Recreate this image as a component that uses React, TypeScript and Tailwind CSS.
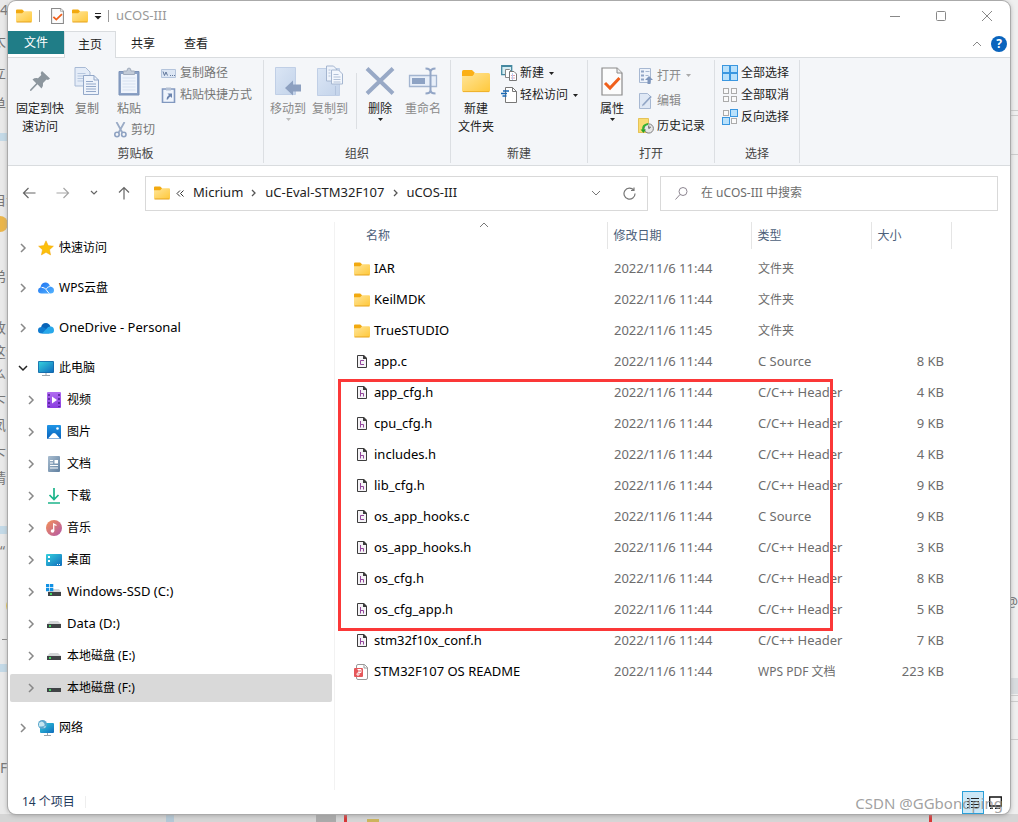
import { ReactNode } from 'react'

type FileItem = {
    name: string
    date: string
    type: string
    size?: string
    icon: 'folder' | 'c' | 'h' | 'pdf'
}

const files: FileItem[] = [
    { name: 'IAR', date: '2022/11/6 11:44', type: '文件夹', icon: 'folder' },
    { name: 'KeilMDK', date: '2022/11/6 11:44', type: '文件夹', icon: 'folder' },
    { name: 'TrueSTUDIO', date: '2022/11/6 11:45', type: '文件夹', icon: 'folder' },
    { name: 'app.c', date: '2022/11/6 11:44', type: 'C Source', size: '8 KB', icon: 'c' },
    { name: 'app_cfg.h', date: '2022/11/6 11:44', type: 'C/C++ Header', size: '4 KB', icon: 'h' },
    { name: 'cpu_cfg.h', date: '2022/11/6 11:44', type: 'C/C++ Header', size: '9 KB', icon: 'h' },
    { name: 'includes.h', date: '2022/11/6 11:44', type: 'C/C++ Header', size: '4 KB', icon: 'h' },
    { name: 'lib_cfg.h', date: '2022/11/6 11:44', type: 'C/C++ Header', size: '9 KB', icon: 'h' },
    { name: 'os_app_hooks.c', date: '2022/11/6 11:44', type: 'C Source', size: '9 KB', icon: 'c' },
    { name: 'os_app_hooks.h', date: '2022/11/6 11:44', type: 'C/C++ Header', size: '3 KB', icon: 'h' },
    { name: 'os_cfg.h', date: '2022/11/6 11:44', type: 'C/C++ Header', size: '8 KB', icon: 'h' },
    { name: 'os_cfg_app.h', date: '2022/11/6 11:44', type: 'C/C++ Header', size: '5 KB', icon: 'h' },
    { name: 'stm32f10x_conf.h', date: '2022/11/6 11:44', type: 'C/C++ Header', size: '7 KB', icon: 'h' },
    { name: 'STM32F107 OS README', date: '2022/11/6 11:44', type: 'WPS PDF 文档', size: '223 KB', icon: 'pdf' },
]

function Gradients() {
    return (
        <svg width="0" height="0" className="absolute" aria-hidden="true">
            <defs>
                <linearGradient id="gFolder" x1="0" y1="0" x2="1" y2="1">
                    <stop offset="0" stopColor="#ffe59a" />
                    <stop offset="1" stopColor="#ffc83a" />
                </linearGradient>
                <linearGradient id="gScreen" x1="0" y1="0" x2="1" y2="1">
                    <stop offset="0" stopColor="#35d0dd" />
                    <stop offset="1" stopColor="#0f6cbd" />
                </linearGradient>
                <linearGradient id="gCloud" x1="0" y1="0" x2="1" y2="1">
                    <stop offset="0" stopColor="#1a6ff0" />
                    <stop offset="1" stopColor="#55b4ff" />
                </linearGradient>
                <linearGradient id="gVideo" x1="0" y1="0" x2="0" y2="1">
                    <stop offset="0" stopColor="#b06cf0" />
                    <stop offset="1" stopColor="#8a3ee0" />
                </linearGradient>
                <linearGradient id="gPhoto" x1="0" y1="0" x2="0" y2="1">
                    <stop offset="0" stopColor="#1f95e6" />
                    <stop offset="1" stopColor="#0861ba" />
                </linearGradient>
                <linearGradient id="gDoc" x1="0" y1="0" x2="1" y2="1">
                    <stop offset="0" stopColor="#a9bdd0" />
                    <stop offset="1" stopColor="#5f7f9f" />
                </linearGradient>
                <linearGradient id="gMusic" x1="0" y1="0" x2="1" y2="1">
                    <stop offset="0" stopColor="#f59256" />
                    <stop offset="1" stopColor="#b257a8" />
                </linearGradient>
                <linearGradient id="gPaper" x1="0" y1="0" x2="1" y2="1">
                    <stop offset="0" stopColor="#dbe6f5" />
                    <stop offset="1" stopColor="#c3d3ea" />
                </linearGradient>
            </defs>
        </svg>
    )
}

function Svg({ w, h, children }: { w: number; h: number; children: ReactNode }) {
    return (
        <svg width={w} height={h} viewBox={`0 0 ${w} ${h}`} fill="none" className="shrink-0" aria-hidden="true">
            {children}
        </svg>
    )
}

function Folder() {
    return (
        <Svg w={16} h={14}>
            <path d="M0 1.500Q0 .5 1 .5h5.200L8 2.200V5H0z" fill="#f2a90f" />
            <path d="M0 4.200h6.200L8 2.300h7q1 0 1 1V12q0 1-1 1H1q-1 0-1-1z" fill="url(#gFolder)" />
            <path d="M.5 13h15" stroke="#e5a21d" />
        </Svg>
    )
}

function BigFolder() {
    return (
        <Svg w={28} h={24}>
            <path d="M0 2.500Q0 1 1.500 1H10l2.500 2.500V8H0z" fill="#fbb017" />
            <path d="M0 7h10.500L13 4h13.500Q28 4 28 5.500v16q0 1.500-1.500 1.500h-25Q0 23 0 21.500z" fill="url(#gFolder)" />
            <path d="M1 22.600h26" stroke="#eeb02a" />
        </Svg>
    )
}

function CheckDoc({ big = false }: { big?: boolean }) {
    return (
        <svg width={big ? 22 : 13} height={big ? 29 : 16} viewBox="0 0 22 29" preserveAspectRatio="none" fill="none" aria-hidden="true">
            <path d="M1 1h15l5 5v22H1z" fill="#fcfcfc" stroke="#8a8a8a" strokeWidth={big ? 1.2 : 1.8} />
            <path d="M16 1v5h5" stroke="#8a8a8a" fill="#eee" />
            <path d="M4 16l5 5 9.500-10" stroke="#f0601c" strokeWidth="3" />
        </svg>
    )
}

function Caret({ color = '#222' }: { color?: string }) {
    return (
        <Svg w={5} h={3}>
            <path d="M0 0h5L2.500 3z" fill={color} />
        </Svg>
    )
}

function Chevron({ open = false }: { open?: boolean }) {
    return (
        <Svg w={10} h={10}>
            {open ? (
                <path d="M1 3l4 4 4-4" stroke="#222" strokeWidth="1.500" />
            ) : (
                <path d="M3 1l4 4-4 4" stroke="#888" strokeWidth="1.500" />
            )}
        </Svg>
    )
}

function PinIcon() {
    return (
        <Svg w={22} h={22}>
            <path d="M13 1l8 7.500-2 1.500-1.500-.5-3.500 3.500q.5 3.500-1.500 5.500l-4-4.200L2 21l-1-.2.200-1.200 6-6.300L3.500 9.500Q6 7.500 9 8.300L12.300 5l-.6-2z" fill="#8c969e" />
        </Svg>
    )
}

function CopyIcon() {
    return (
        <Svg w={26} h={28}>
            <path d="M1 .5h10.500l4.500 4.500v14H1z" fill="#e4ecf8" stroke="#a8bad5" />
            <path d="M3.500 6.500h8M3.500 9h10M3.500 11.500h10M3.500 14h10" stroke="#b6c7df" />
            <path d="M9.500 8.500H20l4.500 4.500v14.500h-15z" fill="#eef3fb" stroke="#93a8c9" />
            <path d="M20 8.500V13h4.500" stroke="#93a8c9" />
            <path d="M12 14.500h7M12 17h10M12 19.500h10M12 22h10M12 24.500h10" stroke="#93a8c9" />
        </Svg>
    )
}

function PasteIcon() {
    return (
        <Svg w={22} h={29}>
            <path d="M1 4.500h20V28H1z" fill="#8ba1c5" stroke="#7b92b8" />
            <path d="M3 7h16v19H3z" fill="#eff4fc" />
            <path d="M4.500 11h13M4.500 14h13M4.500 17h13M4.500 20h13M4.500 23h13" stroke="#d7e1f0" />
            <path d="M5.500 7.500V4H9q0-3 2-3t2 3h3.500v3.500z" fill="#c2cbd8" stroke="#a1acbd" />
        </Svg>
    )
}

function CutIcon() {
    return (
        <Svg w={13} h={16}>
            <path d="M2.500 0l5.800 10.500M10.500 0L4.700 10.500" stroke="#9aabc6" strokeWidth="1.800" />
            <circle cx="3" cy="12.500" r="2.200" stroke="#8ea2c2" strokeWidth="1.600" />
            <circle cx="9.800" cy="12.500" r="2.200" stroke="#8ea2c2" strokeWidth="1.600" />
        </Svg>
    )
}

function CopyPathIcon() {
    return (
        <Svg w={16} h={16}>
            <path d="M.5 4.500h14v8H.5z" fill="#dce6f4" stroke="#b4c4dc" />
            <path d="M2 6.500l1.500 4L5 7l1.500 3.500M9 10.500h1M11 10.500h1M13 10.500h1" stroke="#62789c" />
        </Svg>
    )
}

function PasteShortcutIcon() {
    return (
        <Svg w={16} h={16}>
            <path d="M1.500 2h12v13.500h-12z" fill="#eff4fc" stroke="#8198bf" strokeWidth="1.600" />
            <path d="M5 .5h5v3H5z" fill="#b3c0d4" />
            <path d="M5.500 12.500q0-3 2.500-4.500L6.500 6.500h4.500V11L9.500 9.500q-2 1-2.500 3z" fill="#6a83ad" />
        </Svg>
    )
}

function MoveToIcon() {
    return (
        <Svg w={28} h={30}>
            <path d="M1.500 1.500h20v27h-20z" fill="url(#gPaper)" stroke="#c0cfe6" />
            <path d="M11 22l8-7.500v4h8v7h-8v4z" fill="#8da0c0" />
        </Svg>
    )
}

function CopyToIcon() {
    return (
        <Svg w={28} h={32}>
            <path d="M1.500 3.500h22v27h-22z" fill="url(#gPaper)" stroke="#c0cfe6" />
            <path d="M19.500 21v9" stroke="#b3c4de" />
            <path d="M10.500 1h7l3 3v12h-10z" fill="#eef3fb" stroke="#a5b6d0" />
            <path d="M15.500 5h7l4 4v10h-11z" fill="#f3f7fd" stroke="#a5b6d0" />
            <path d="M17.500 9.500h5M17.500 12h7M17.500 14.500h7M17.500 17h7M12.500 5h2M12.500 8h2M12.500 11h2" stroke="#b2c1d8" />
        </Svg>
    )
}

function DeleteIcon() {
    return (
        <Svg w={30} h={30}>
            <path d="M2 2.500l26 25M28 2.500l-26 25" stroke="#98a9c6" strokeWidth="4" />
        </Svg>
    )
}

function RenameIcon() {
    return (
        <Svg w={30} h={28}>
            <path d="M1.500 8.500h27v11h-27z" fill="#e8eff9" stroke="#a3b5d0" strokeWidth="1.300" />
            <path d="M4 11h13v6H4z" fill="#8ea3c4" />
            <path d="M17.500 1.500q5 0 5 3.500v18q0 3.500-5 3.500M27.500 1.500q-5 0-5 3.500v18q0 3.500 5 3.500" stroke="#93a6c6" strokeWidth="2" />
        </Svg>
    )
}

function NewItemIcon() {
    return (
        <Svg w={16} h={16}>
            <path d="M.7.700h10v9h-10z" fill="#d5edf3" stroke="#4488a0" strokeWidth="1.300" />
            <path d="M1 1.500h9.500" stroke="#4488a0" />
            <path d="M4.500 4.500h4l2 2v6h-6z" fill="#fff" stroke="#888" />
            <path d="M8.500 6.500H13l2.500 2.500v6.500h-7z" fill="#fff" stroke="#777" />
            <path d="M10 10.500h4M10 13h4" stroke="#e2a0b0" />
            <path d="M11.500 8v7" stroke="#b8cdf0" />
        </Svg>
    )
}

function EasyAccessIcon() {
    return (
        <Svg w={16} h={16}>
            <path d="M4.500.5h7l4 4v11h-11z" fill="#fff" stroke="#777" />
            <path d="M11.500.5v4h4" stroke="#777" />
            <path d="M2 4h6M0 6.500h6M1.500 9h4" stroke="#1667b5" strokeWidth="1.300" />
        </Svg>
    )
}

function OpenIcon() {
    return (
        <Svg w={14} h={16}>
            <path d="M.5.5h11v14H.5z" fill="#eef3fb" stroke="#a7b8d2" />
            <path d="M2 2.500h3v2H2zM2 6.500h3v2H2zM2 10.500h3v2H2z" fill="#8fa4c5" />
            <path d="M6.500 3.500h4M6.500 7.500h3" stroke="#a7b8d2" />
            <path d="M10 8l4 4h-2.500v4h-3v-4H6z" fill="#7f96bc" />
        </Svg>
    )
}

function EditIcon() {
    return (
        <Svg w={14} h={16}>
            <path d="M.5.5h8l3 3v12H.5z" fill="#dfe8f5" stroke="#a7b8d2" />
            <path d="M13 4L5 12.500l-2.500 1.500.8-2.800L11.500 2.500z" fill="#8fa4c5" stroke="#f1f5fb" strokeWidth=".5" />
        </Svg>
    )
}

function HistoryIcon() {
    return (
        <Svg w={16} h={16}>
            <path d="M0 .5h10.500V15H0z" fill="#f9dc72" />
            <path d="M.5.5h10v14H.5z" stroke="#e5c258" />
            <circle cx="10.800" cy="10.500" r="4.600" fill="#e6e6e6" stroke="#7f7f7f" />
            <path d="M10.800 7.500v3l2-1.500" stroke="#555" />
            <path d="M2.500 11.500h5.500L5.500 15z" fill="#2aa22a" />
            <path d="M5 12q-.5-5 5-6" stroke="#35b135" strokeWidth="2" />
        </Svg>
    )
}

function SelectIcon({ on }: { on: boolean[] }) {
    return (
        <Svg w={16} h={16}>
            {on.map((selected, i) => {
                const x = (i % 2) * 8
                const y = Math.floor(i / 2) * 8
                return selected ? (
                    <rect key={i} x={x + 0.5} y={y + 0.5} width="7" height="7" fill="#b9e1fb" stroke="#3a97e0" />
                ) : (
                    <rect key={i} x={x + 1.5} y={y + 1.5} width="5" height="5" fill="#fafafa" stroke="#ababab" />
                )
            })}
        </Svg>
    )
}

function SourceFileIcon({ kind }: { kind: 'c' | 'h' }) {
    return (
        <Svg w={16} h={16}>
            <path d="M3.500 1.500h6l3 3v9h-9z" fill="#f5f3f6" stroke="#3d3d3d" />
            <path d="M9 1h1l3 3v1H9z" fill="#3d3d3d" />
            {kind === 'h' ? (
                <path d="M6.500 5v6.500M6.500 8.500h3v3" stroke="#93479c" />
            ) : (
                <path d="M10 6.500H6.500v4H10" stroke="#93479c" />
            )}
        </Svg>
    )
}

function PdfIcon() {
    return (
        <Svg w={16} h={16}>
            <path d="M2.500 2q0-1.500 1.500-1.500h6.500l3 3V14q0 1.500-1.500 1.500H4q-1.500 0-1.500-1.500z" fill="#fff" stroke="#999" />
            <path d="M10 .5v3.500h3.500" stroke="#999" />
            <rect x="0" y="4" width="9" height="9" rx="1" fill="#e5575a" />
            <path d="M3.500 5.500h3.500v3H4.500q-2 .5-1.500 2.500h2V6" stroke="#fff" />
        </Svg>
    )
}

function FileIcon({ icon }: { icon: FileItem['icon'] }) {
    if (icon === 'folder') return <Folder />
    if (icon === 'pdf') return <PdfIcon />
    return <SourceFileIcon kind={icon} />
}

const treeIcons: Record<string, ReactNode> = {
    star: <path d="M8 .8l2.200 4.800 5.200.6-3.900 3.500 1.100 5.200L8 12.300l-4.600 2.600 1.100-5.200L.6 6.200l5.200-.6z" fill="#fcc00b" stroke="#f3a50c" strokeWidth=".5" />,
    wps: (
        <>
            <path d="M3.500 13.500Q0 13.500 0 10.500 0 8 2.500 7.500 3 3 7 2.500q4-.2 5 4 4 .5 4 3.700 0 3.300-3.500 3.300z" fill="url(#gCloud)" />
            <path d="M3.500 7.300q3.500 0 5 2.700t3 3.500" stroke="#fff" />
            <path d="M12 6.500q-2.500 0-3.700 2.500" stroke="#dff0ff" />
        </>
    ),
    onedrive: (
        <>
            <path d="M3 8Q3.500 3 8 3q3 0 4.500 3.500L9 10z" fill="#0864b8" />
            <path d="M3.500 13.500Q0 13.500 0 10.300 0 7 4 7q2 0 3.500 1.500l4 5z" fill="#0f7bd0" />
            <path d="M4 13.400l4.500-4.600q1.500-2.500 4-2.300 3.500.3 3.500 3.700 0 3.300-3.500 3.300h-8z" fill="#28a8ea" />
        </>
    ),
    pc: (
        <>
            <path d="M4 15.500h8M8 13v2.500" stroke="#9aa4ad" />
            <rect x="0" y="1" width="16" height="12" rx="1" fill="#1668a8" />
            <rect x=".8" y="1.800" width="14.400" height="10.400" fill="url(#gScreen)" />
        </>
    ),
    video: (
        <>
            <rect x="1" y="0" width="14" height="16" rx="1" fill="url(#gVideo)" />
            <path d="M3 2v13M13 2v13" stroke="#4e1e91" strokeWidth="1.500" strokeDasharray="2 2" />
            <path d="M6 4.500l5 3.500-5 3.500z" fill="#fff" />
        </>
    ),
    photo: (
        <>
            <rect x="1" y="1" width="14" height="14" rx="1" fill="url(#gPhoto)" />
            <path d="M2 14.500l4.500-5q1.500-1.200 3 0l4.500 5z" fill="#fff" />
            <circle cx="11.500" cy="4.500" r="1.300" fill="#fff" />
        </>
    ),
    doc: (
        <>
            <rect x="2" y="0" width="12" height="16" rx="1" fill="url(#gDoc)" />
            <path d="M4 4.500h3M4 7h3M4 9.500h8M4 12h8" stroke="#fff" />
            <path d="M8.500 4h3.500v3.500H8.500z" fill="#fff" />
        </>
    ),
    download: <path d="M8 0v11M3.500 7L8 11.500 12.500 7M2 15h12" stroke="#1cb48a" strokeWidth="1.700" />,
    music: (
        <>
            <circle cx="8" cy="8" r="8" fill="url(#gMusic)" />
            <circle cx="6.500" cy="11" r="1.800" fill="#fff" />
            <path d="M7.700 11V4l2.800 1.500" stroke="#fff" strokeWidth="1.300" />
        </>
    ),
    desktop: (
        <>
            <rect x="0" y="2" width="16" height="12" rx="1" fill="url(#gScreen)" />
            <path d="M2 4h2v2H2zM2 8h2v2H2zM11 12h1v1h-1zM13 12h1v1h-1z" fill="#fff" />
        </>
    ),
    windows: (
        <>
            <path d="M5 5h8l2 3H2z" fill="#d4d6d8" />
            <path d="M2 8h13v4H2z" fill="#404346" />
            <path d="M4 9h2v2H4z" fill="#45d564" />
            <path d="M0 0h3.300v3.300H0zM4 0h3.300v3.300H4zM0 4h3.300v3.300H0zM4 4h3.300v3.300H4z" fill="#1191e4" />
        </>
    ),
    drive: (
        <>
            <path d="M4 5h8l3 3H1z" fill="#d4d6d8" />
            <path d="M1 8h14v4H1z" fill="#404346" />
            <path d="M3 9h2v2H3z" fill="#45d564" />
        </>
    ),
    network: (
        <>
            <path d="M6 15.500h7M9.500 13v2.500" stroke="#9aa4ad" />
            <rect x="2" y="3" width="14" height="10" rx="1" fill="url(#gScreen)" />
            <circle cx="4.500" cy="4.500" r="4.500" fill="#5aa6cc" />
            <path d="M1 3q3-3 5 0T4 6.500 1 5zM5 7l3-1-1 2z" fill="#c5e6f0" />
        </>
    ),
}

const tree = [
    { label: '快速访问', icon: 'star', row: 'h-10 pl-2' },
    { label: 'WPS云盘', icon: 'wps', row: 'h-10 pl-2' },
    { label: 'OneDrive - Personal', icon: 'onedrive', row: 'h-10 pl-2' },
    { label: '此电脑', icon: 'pc', row: '-mb-1 h-10 pl-2', open: true },
    { label: '视频', icon: 'video', row: 'h-8 pl-4' },
    { label: '图片', icon: 'photo', row: 'h-8 pl-4' },
    { label: '文档', icon: 'doc', row: 'h-8 pl-4' },
    { label: '下载', icon: 'download', row: 'h-8 pl-4' },
    { label: '音乐', icon: 'music', row: 'h-8 pl-4' },
    { label: '桌面', icon: 'desktop', row: 'h-8 pl-4' },
    { label: 'Windows-SSD (C:)', icon: 'windows', row: 'h-8 pl-4' },
    { label: 'Data (D:)', icon: 'drive', row: 'h-8 pl-4' },
    { label: '本地磁盘 (E:)', icon: 'drive', row: 'h-8 pl-4' },
    { label: '本地磁盘 (F:)', icon: 'drive', row: 'my-[2px] h-7 rounded-[2px] bg-[#d9d9d9] pl-4' },
    { label: '网络', icon: 'network', row: 'mt-[6px] h-10 pl-2' },
]

function Group({ title, className, children }: { title: string; className: string; children: ReactNode }) {
    return (
        <section className={`my-[2px] flex shrink-0 flex-col border-r border-[#dcdfe3] ${className}`}>
            <div className="flex h-[85px] items-start pt-px">{children}</div>
            <h2 className="text-center leading-[18px] text-[#444]">{title}</h2>
        </section>
    )
}

function BigButton({ icon, label, className, caret }: { icon: ReactNode; label: ReactNode; className: string; caret?: string }) {
    return (
        <button className={`flex shrink-0 flex-col items-center pt-1 leading-[18px] ${className}`}>
            <span className="mb-[3px] flex h-8 items-center">{icon}</span>
            <span>{label}</span>
            {caret && <Caret color={caret} />}
        </button>
    )
}

function SmallButton({ icon, label, className = '', caret }: { icon: ReactNode; label: string; className?: string; caret?: string }) {
    return (
        <button className={`flex items-center whitespace-nowrap ${className}`}>
            <span className="mr-[3px] flex w-4 justify-center">{icon}</span>
            <span className="mr-[5px]">{label}</span>
            {caret && <Caret color={caret} />}
        </button>
    )
}

function Ribbon() {
    return (
        <div className="flex h-[108px] overflow-hidden border-b border-[#d9dcdf] bg-[#f4f6f9]">
            <Group title="剪贴板" className="w-64">
                <BigButton className="ml-[3px] w-[58px]" icon={<PinIcon />} label={<>固定到快<br />速访问</>} />
                <BigButton className="w-9 text-[#767676]" icon={<CopyIcon />} label="复制" />
                <div className="w-12 text-[#767676]">
                    <BigButton className="w-12" icon={<PasteIcon />} label="粘贴" />
                    <SmallButton className="ml-[7px] h-6" icon={<CutIcon />} label="剪切" />
                </div>
                <div className="ml-2 pt-px text-[#767676]">
                    <SmallButton className="h-[22px]" icon={<CopyPathIcon />} label="复制路径" />
                    <SmallButton className="h-[22px]" icon={<PasteShortcutIcon />} label="粘贴快捷方式" />
                </div>
            </Group>
            <Group title="组织" className="w-[187px]">
                <BigButton className="ml-[3px] w-[42px] text-[#8a8a8a]" icon={<MoveToIcon />} label="移动到" caret="#bbb" />
                <BigButton className="w-[42px] text-[#8a8a8a]" icon={<CopyToIcon />} label="复制到" caret="#bbb" />
                <div className="mt-3 ml-[5px] h-14 w-px bg-[#dcdfe3]" />
                <BigButton className="w-[46px]" icon={<DeleteIcon />} label="删除" caret="#222" />
                <BigButton className="w-10 text-[#8a8a8a]" icon={<RenameIcon />} label="重命名" />
            </Group>
            <Group title="新建" className="w-[137px]">
                <BigButton className="w-[50px]" icon={<BigFolder />} label={<>新建<br />文件夹</>} />
                <div className="pt-px">
                    <SmallButton className="h-[22px]" icon={<NewItemIcon />} label="新建" caret="#222" />
                    <SmallButton className="h-[22px]" icon={<EasyAccessIcon />} label="轻松访问" caret="#222" />
                </div>
            </Group>
            <Group title="打开" className="w-[127px]">
                <BigButton className="w-12" icon={<CheckDoc big />} label="属性" caret="#222" />
                <div className="ml-[2px] pt-[2px]">
                    <SmallButton className="h-[25px] text-[#8a8a8a]" icon={<OpenIcon />} label="打开" caret="#aaa" />
                    <SmallButton className="h-[25px] text-[#8a8a8a]" icon={<EditIcon />} label="编辑" />
                    <SmallButton className="h-[25px]" icon={<HistoryIcon />} label="历史记录" />
                </div>
            </Group>
            <Group title="选择" className="w-[85px]">
                <div className="ml-[7px] pt-px">
                    <SmallButton className="h-[22px]" icon={<SelectIcon on={[true, true, true, true]} />} label="全部选择" />
                    <SmallButton className="h-[22px]" icon={<SelectIcon on={[false, false, false, false]} />} label="全部取消" />
                    <SmallButton className="h-[22px]" icon={<SelectIcon on={[false, true, true, false]} />} label="反向选择" />
                </div>
            </Group>
        </div>
    )
}

function TitleBar() {
    return (
        <header className="flex h-[30px] items-center pl-2 text-[#999]">
            <Folder />
            <span className="ml-[7px] h-3 w-px bg-[#999]" />
            <button className="ml-[11px]" aria-label="属性"><CheckDoc /></button>
            <button className="ml-2" aria-label="新建文件夹"><Folder /></button>
            <button className="mx-[6px]" aria-label="自定义快速访问工具栏">
                <Svg w={8} h={8}>
                    <path d="M1 1.500h6" stroke="#222" />
                    <path d="M.5 4h7L4 7.500z" fill="#222" />
                </Svg>
            </button>
            <span className="h-3 w-px bg-[#999]" />
            <h1 className="ml-[7px] text-[13px]">uCOS-III</h1>
            <div className="ml-auto flex">
                <button className="flex h-7 w-[46px] items-center justify-center" aria-label="最小化">
                    <Svg w={10} h={10}><path d="M0 5.500h10" stroke="#888" /></Svg>
                </button>
                <button className="flex h-7 w-[46px] items-center justify-center" aria-label="最大化">
                    <Svg w={10} h={10}><rect x=".5" y=".5" width="9" height="9" rx="1" stroke="#888" /></Svg>
                </button>
                <button className="flex h-7 w-[46px] items-center justify-center" aria-label="关闭">
                    <Svg w={10} h={10}><path d="M0 0l10 10M10 0L0 10" stroke="#888" /></Svg>
                </button>
            </div>
        </header>
    )
}

function Tabs() {
    return (
        <nav className="flex h-[27px] border-b border-[#d9dcdf]">
            <button className="mb-[3px] w-14 bg-[#207d87] text-white">文件</button>
            <button className="-mb-px w-[52px] border border-b-0 border-[#d9dcdf] bg-[#f4f6f9]">主页</button>
            <button className="w-[54px]">共享</button>
            <button className="w-[52px]">查看</button>
            <button className="mr-[9px] ml-auto" aria-label="最小化功能区">
                <Svg w={10} h={8}><path d="M1 6l4-4 4 4" stroke="#888" /></Svg>
            </button>
            <button className="mr-[3px] flex items-center" aria-label="帮助">
                <span className="flex size-4 items-center justify-center rounded-full bg-[#0a64bd] leading-4 font-bold text-white">?</span>
            </button>
        </nav>
    )
}

function Separator() {
    return (
        <Svg w={6} h={8}><path d="M1 1l3 3-3 3" stroke="#555" strokeWidth="1.300" /></Svg>
    )
}

function AddressBar() {
    return (
        <div className="flex h-[54px] items-center pr-3">
            <div className="flex w-[137px] shrink-0 items-center gap-5 pl-[14px]">
                <button aria-label="后退">
                    <Svg w={14} h={12}><path d="M13.500 6H1.500M6.500 1l-5 5 5 5" stroke="#666" strokeWidth="1.200" /></Svg>
                </button>
                <button aria-label="前进">
                    <Svg w={14} h={12}><path d="M.5 6h12M7.500 1l5 5-5 5" stroke="#a5a5a5" strokeWidth="1.200" /></Svg>
                </button>
                <button aria-label="最近浏览的位置">
                    <Svg w={8} h={6}><path d="M1 1l3 3 3-3" stroke="#666" strokeWidth="1.200" /></Svg>
                </button>
                <button aria-label="向上">
                    <Svg w={12} h={14}><path d="M6 13.500V1.500M1 6.500l5-5 5 5" stroke="#666" strokeWidth="1.200" /></Svg>
                </button>
            </div>
            <div className="grid min-w-0 flex-1 grid-cols-[503fr_338fr] gap-3">
                <div className="flex h-[35px] min-w-0 items-center border border-[#d9d9d9] pl-2 text-[13px]">
                    <Folder />
                    <span className="mx-[6px]">
                        <Svg w={8} h={7}><path d="M4 .5l-3 3 3 3M7.500.5l-3 3 3 3" stroke="#333" /></Svg>
                    </span>
                    <a href="#micrium" className="mr-2 ml-[3px]">Micrium</a>
                    <Separator />
                    <a href="#eval" className="mx-2">uC-Eval-STM32F107</a>
                    <Separator />
                    <a href="#ucos" className="ml-2">uCOS-III</a>
                    <button className="mr-[22px] ml-auto" aria-label="以前的位置">
                        <Svg w={10} h={7}><path d="M1 1l4 4 4-4" stroke="#777" /></Svg>
                    </button>
                    <button className="mr-[11px]" aria-label="刷新">
                        <Svg w={13} h={13}><path d="M10.800 3.200A5.500 5.500 0 1 0 12 6.500M11 .5v3H8" stroke="#777" strokeWidth="1.200" /></Svg>
                    </button>
                </div>
                <label className="flex h-[35px] min-w-0 items-center border border-[#d9d9d9] pl-[14px]">
                    <Svg w={13} h={13}><circle cx="8" cy="4.500" r="4" stroke="#8c8590" /><path d="M5 7.500L.5 12.500" stroke="#8c8590" /></Svg>
                    <input
                        aria-label="搜索"
                        placeholder="在 uCOS-III 中搜索"
                        className="ml-[13px] w-full min-w-0 outline-none placeholder:text-[#6d6d6d]"
                    />
                </label>
            </div>
        </div>
    )
}

function NavTree() {
    return (
        <nav className="w-[326px] shrink-0 px-[2px] pt-[6px]">
            <ul>
                {tree.map(node => (
                    <li key={node.label} className={`flex items-center ${node.row}`}>
                        <Chevron open={node.open} />
                        <a
                            href="#tree"
                            className={`ml-[10px] flex items-center gap-[5px] text-black ${/^[ -~]+$/.test(node.label) ? 'text-[13px]' : ''}`}
                        >
                            <Svg w={16} h={16}>{treeIcons[node.icon]}</Svg>
                            {node.label}
                        </a>
                    </li>
                ))}
            </ul>
        </nav>
    )
}

function FileTable() {
    return (
        <main className="relative min-w-0 flex-1 overflow-hidden border-l border-[#f2f2f2]">
            <span className="absolute top-0 left-[144px]">
                <Svg w={10} h={6}><path d="M1 5l4-4 4 4" stroke="#777" /></Svg>
            </span>
            <table className="w-[616px] table-fixed border-collapse">
                <thead>
                    <tr className="h-[27px] text-left text-[#4c607a]">
                        <th className="w-[272px] border-r border-[#e5e5e5] pl-[31px] font-normal">名称</th>
                        <th className="w-36 border-r border-[#e5e5e5] pl-[6px] font-normal">修改日期</th>
                        <th className="w-[120px] border-r border-[#e5e5e5] pl-[6px] font-normal">类型</th>
                        <th className="w-20 border-r border-[#e5e5e5] pl-[6px] font-normal">大小</th>
                    </tr>
                </thead>
                <tbody className="before:block before:h-1">
                    {files.map(file => (
                        <tr key={file.name} className="h-[31px] text-[13px] text-[#6d6d6d]">
                            <td className="pl-[19px] text-black">
                                <span className="flex items-center gap-1">
                                    <FileIcon icon={file.icon} />
                                    {file.name}
                                </span>
                            </td>
                            <td className="pl-[7px]">{file.date}</td>
                            <td className={`pl-[7px] whitespace-nowrap ${file.type.startsWith('C') ? '' : 'text-[12px]'}`}>{file.type}</td>
                            <td className="pr-[7px] text-right">{file.size}</td>
                        </tr>
                    ))}
                </tbody>
            </table>
            {/* marked header files */}
            <div className="pointer-events-none absolute top-[157px] left-[3px] h-[252px] w-[495px] border-3 border-[#fb3838]" />
        </main>
    )
}

function StatusBar() {
    return (
        <footer className="relative flex h-6 items-center pl-[14px] text-[#1e395b]">
            <span>14 个项目</span>
            <span className="ml-[10px] h-3 w-px bg-[#eee]" />
            <button className="ml-auto flex h-[23px] w-[22px] items-center justify-center border border-[#2a9fd8] bg-[#cce8f7]" aria-label="详细信息">
                <Svg w={14} h={11}><path d="M1 1.500h2M5 1.500h8M1 4.500h2M5 4.500h8M1 7.500h2M5 7.500h8M1 10.500h2M5 10.500h8" stroke="#222" /></Svg>
            </button>
            <button className="mr-2 ml-[5px]" aria-label="大图标">
                <Svg w={13} h={13}><path d="M.7 1h11.600v9H.7zM1 12.500h3M6 12.500h5" stroke="#111" strokeWidth="1.300" /></Svg>
            </button>
            <span className="absolute right-[7px] bottom-px text-[15px] leading-5 whitespace-nowrap text-[#888]/80">CSDN @GGbondping</span>
        </footer>
    )
}

// slivers of the page that stay visible around the window
function Backdrop() {
    return (
        <div className="absolute inset-0 overflow-hidden text-[14px] leading-5 text-[#777]" aria-hidden="true">
            <div className="absolute top-0 left-0 h-full w-2 bg-[#e9e9e9]" />
            <div className="absolute top-[133px] left-0 h-2 w-2 bg-[#c3d9e7]" />
            <div className="absolute top-[526px] left-0 h-2 w-2 bg-[#c3d9e7]" />
            <div className="absolute top-[664px] left-0 h-2 w-2 bg-[#c3d9e7]" />
            <div className="absolute top-0 -left-2">54</div>
            <div className="absolute top-[31px] -left-2">太</div>
            <div className="absolute top-[63px] -left-2">立</div>
            <div className="absolute top-[94px] -left-2">单的</div>
            <div className="absolute top-[190px] -left-2">自动</div>
            <div className="absolute top-[216px] -left-2 size-4 rounded-full bg-[#eab54a]" />
            <div className="absolute top-[267px] -left-2">弟</div>
            <div className="absolute top-[318px] -left-2">改</div>
            <div className="absolute top-[342px] -left-2">这个</div>
            <div className="absolute top-[363px] -left-2">么</div>
            <div className="absolute top-[392px] -left-2">下</div>
            <div className="absolute top-[415px] -left-2">凤</div>
            <div className="absolute top-[445px] -left-2">下</div>
            <div className="absolute top-[468px] -left-2">精</div>
            <div className="absolute top-[541px] left-0">“</div>
            <div className="absolute top-[598px] left-[6px] size-4 rounded-full bg-[#e8c94a]" />
            <div className="absolute top-[639px] left-[2px] h-px w-2 bg-[#888]" />
            <div className="absolute top-[758px] left-0">F</div>
            <div className="absolute top-[110px] right-0 h-[6px] w-2 border-y border-[#ccc]" />
            <div className="absolute top-[154px] right-0 h-px w-2 bg-[#ccc]" />
            <div className="absolute top-[592px] right-0">@</div>
            <div className="absolute top-[678px] right-0 h-4 w-2 bg-[#d8dcdf]" />
            <div className="absolute top-[695px] right-0 h-[7px] w-2 border-y border-[#ccc]" />
            <div className="absolute top-[739px] right-0 h-px w-2 bg-[#ccc]" />
            <div className="absolute bottom-0 left-0 h-2 w-full bg-[#d5d5d5]" />
            <div className="absolute bottom-0 left-[166px] h-2 w-2 bg-[#b3c8d6]" />
            <div className="absolute bottom-0 left-[316px] h-2 w-5 bg-[#aaa]" />
            <div className="absolute bottom-0 left-[344px] h-2 w-[588px] border-x-3 border-[#d73535]" />
            <div className="absolute bottom-0 left-[367px] h-[3px] w-3 bg-[#cdb45c]" />
        </div>
    )
}

export default function App() {
    return (
        <div className="relative flex min-h-screen bg-[#efefef] pt-px pr-2 pb-2 pl-2 font-['Noto_Sans','Noto_Sans_CJK_SC',sans-serif] text-[12px] text-[#222]">
            <Gradients />
            <Backdrop />
            <div className="relative flex min-w-0 flex-1 flex-col overflow-hidden rounded-lg bg-white shadow-[0_0_0_1px_#aaa,0_1px_5px_#999]">
                <TitleBar />
                <Tabs />
                <Ribbon />
                <AddressBar />
                <div className="flex flex-1 pt-[2px]">
                    <NavTree />
                    <FileTable />
                </div>
                <StatusBar />
            </div>
        </div>
    )
}
